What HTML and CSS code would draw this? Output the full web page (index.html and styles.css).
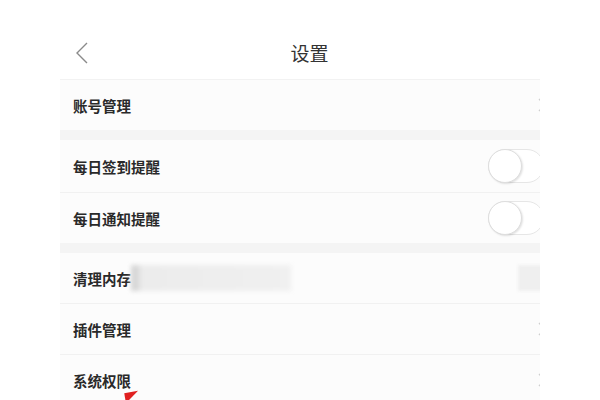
FILE: index.html
```html
<!DOCTYPE html>
<html lang="zh-CN">
<head>
<meta charset="utf-8">
<link rel="stylesheet" href="styles.css">
</head>
<body>
<div class="panel">
  <div class="header">
    <svg class="back" width="14" height="22" viewBox="0 0 14 22"><path d="M12 1 L2 11 L12 21" fill="none" stroke="#8a8a8a" stroke-width="1.4"/></svg>
    <div class="title">设置</div>
  </div>
  <div class="group">
    <div class="row"><span class="label">账号管理</span><svg class="arrow" width="8" height="14" viewBox="0 0 8 14"><path d="M1 1 L7 7 L1 13" fill="none" stroke="#cfcfcf" stroke-width="1.3"/></svg></div>
  </div>
  <div class="gap"></div>
  <div class="group tall">
    <div class="row"><span class="label">每日签到提醒</span><span class="toggle"><span class="knob"></span></span></div>
    <div class="row"><span class="label">每日通知提醒</span><span class="toggle"><span class="knob"></span></span></div>
  </div>
  <div class="gap"></div>
  <div class="group">
    <div class="row"><span class="label fixed">清理内存</span><span class="smudge"></span><span class="spacer"></span><span class="smudge2"></span></div>
    <div class="row"><span class="label">插件管理</span><svg class="arrow" width="8" height="14" viewBox="0 0 8 14"><path d="M1 1 L7 7 L1 13" fill="none" stroke="#cfcfcf" stroke-width="1.3"/></svg></div>
    <div class="row"><span class="label">系统权限</span><svg class="arrow" width="8" height="14" viewBox="0 0 8 14"><path d="M1 1 L7 7 L1 13" fill="none" stroke="#cfcfcf" stroke-width="1.3"/></svg></div>
  </div>
</div>
<div class="cursor"></div>
</body>
</html>
```
FILE: styles.css
```css
html, body {
  margin: 0;
  padding: 0;
  background: #ffffff;
  font-family: "Noto Sans CJK SC", "Noto Sans", sans-serif;
}
body {
  width: 600px;
  height: 400px;
  overflow: hidden;
  position: relative;
}
.panel {
  width: 480px;
  margin-left: 60px;
  overflow: hidden;
}
.header {
  height: 80px;
  display: flex;
  align-items: center;
  padding-left: 15px;
  padding-top: 26px;
  border-bottom: 1px solid #f2f2f2;
  box-sizing: border-box;
  background: #fff;
}
.title {
  flex: 1;
  text-align: center;
  font-size: 19px;
  color: #333;
  margin-right: 10px;
}
.group {
  background: #fcfcfc;
}
.gap {
  height: 10px;
  background: #f4f4f4;
}
.row {
  height: 51px;
  box-sizing: border-box;
  display: flex;
  align-items: center;
  padding-left: 13px;
  border-top: 1px solid #f1f1f1;
}
.group .row:first-child {
  border-top: none;
  height: 50px;
}
.group.tall .row:first-child {
  height: 52px;
}
.label {
  font-size: 14.5px;
  font-weight: 700;
  color: #2a2a2a;
  flex: 1;
}
.label.fixed {
  flex: none;
}
.arrow {
  margin-right: -6px;
  flex: none;
}
.toggle {
  width: 56px;
  height: 34px;
  border: 1px solid #e6e6e6;
  border-radius: 18px;
  box-sizing: border-box;
  margin-right: -4px;
  position: relative;
  background: #fff;
}
.knob {
  position: absolute;
  left: -1px;
  top: -1px;
  width: 32px;
  height: 32px;
  border-radius: 50%;
  background: #fff;
  border: 1px solid #dedede;
  box-shadow: 1px 1px 2px rgba(0,0,0,0.12);
}
.smudge {
  width: 160px;
  height: 26px;
  background: linear-gradient(90deg, #d6d6d6 0, #d8d8d8 6px, #ececec 11px, #f0f0f0 100%);
  filter: blur(2px);
}
.spacer {
  flex: 1;
}
.smudge2 {
  width: 26px;
  height: 26px;
  background: #efefef;
  filter: blur(1.5px);
  margin-right: -4px;
}
.cursor {
  position: absolute;
  left: 125px;
  top: 392px;
  width: 0;
  height: 0;
  border-left: 14px solid #e02020;
  border-bottom: 10px solid transparent;
  transform: rotate(-10deg);
}
```
